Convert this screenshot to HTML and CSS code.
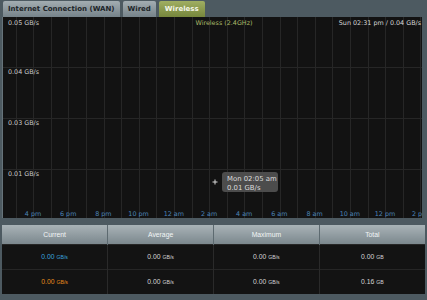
FILE: index.html
```html
<html>
<head>
	<meta charset="utf-8">
	<link rel="stylesheet" href="styles.css">
</head>
<body>
<div class="tabs">
	<div class="tab">Internet Connection (WAN)</div>
	<div class="tab">Wired</div>
	<div class="tab tab-active">Wireless</div>
</div>

<div class="chart">
	<svg width="419" height="201" viewBox="0 0 419 201">
		<g class="grid" id="grid"></g>
		<line class="hline" x1="0" y1="50.5" x2="419" y2="50.5"/>
		<line class="hline" x1="0" y1="101.5" x2="419" y2="101.5"/>
		<line class="hline" x1="0" y1="152.5" x2="419" y2="152.5"/>

		<text class="ylabel" x="5" y="7.5">0.05 GB/s</text>
		<text class="ylabel" x="5" y="57">0.04 GB/s</text>
		<text class="ylabel" x="5" y="108">0.03 GB/s</text>
		<text class="ylabel" x="5" y="159">0.01 GB/s</text>

		<text class="title" x="221" y="8" text-anchor="middle">Wireless (2.4GHz)</text>
		<text class="now" x="418" y="8" text-anchor="end">Sun 02:31 pm / 0.04 GB/s</text>

		<g class="xlabels" text-anchor="middle">
			<text x="30" y="199">4 pm</text>
			<text x="65.2" y="199">6 pm</text>
			<text x="100.4" y="199">8 pm</text>
			<text x="135.6" y="199">10 pm</text>
			<text x="170.8" y="199">12 am</text>
			<text x="206" y="199">2 am</text>
			<text x="241.2" y="199">4 am</text>
			<text x="276.4" y="199">6 am</text>
			<text x="311.6" y="199">8 am</text>
			<text x="346.8" y="199">10 am</text>
			<text x="382" y="199">12 pm</text>
			<text x="417.2" y="199">2 pm</text>
		</g>

		<g class="cursor">
			<line x1="209.5" y1="165" x2="214.5" y2="165"/>
			<line x1="212" y1="162.5" x2="212" y2="167.5"/>
		</g>
		<rect class="tip" x="219" y="155" width="56" height="20" rx="3"/>
		<text class="tiptext" x="224" y="164">Mon 02:05 am</text>
		<text class="tiptext" x="224" y="172.5">0.01 GB/s</text>
	</svg>
</div>

<table class="stats">
	<tr>
		<th>Current</th>
		<th>Average</th>
		<th>Maximum</th>
		<th>Total</th>
	</tr>
	<tr>
		<td class="rx">0.00 <span class="unit">GB/s</span></td>
		<td>0.00 <span class="unit">GB/s</span></td>
		<td>0.00 <span class="unit">GB/s</span></td>
		<td>0.00 <span class="unit">GB</span></td>
	</tr>
	<tr>
		<td class="tx">0.00 <span class="unit">GB/s</span></td>
		<td>0.00 <span class="unit">GB/s</span></td>
		<td>0.00 <span class="unit">GB/s</span></td>
		<td>0.16 <span class="unit">GB</span></td>
	</tr>
</table>

<script type="text/javascript">
	var grid = document.getElementById("grid");
	for (var k = 0; k < 24; k++) {
		var x = Math.round(12.6 + 17.6 * k) + 0.5;
		var l = document.createElementNS("http://www.w3.org/2000/svg", "line");
		l.setAttribute("x1", x);
		l.setAttribute("x2", x);
		l.setAttribute("y1", 0);
		l.setAttribute("y2", 201);
		grid.appendChild(l);
	}
</script>
</body>
</html>
```

FILE: styles.css
```css
body {
	margin: 0;
	background: #4d5a61;
	font-family: "DejaVu Sans", Verdana, sans-serif;
	width: 427px;
	height: 300px;
	overflow: hidden;
}

.tabs {
	display: flex;
	gap: 3px;
	padding: 1px 0 0 3px;
	height: 16px;
}
.tab {
	height: 16px;
	line-height: 16px;
	padding: 0 5px;
	font-size: 7px;
	font-weight: bold;
	color: #1d2529;
	background: linear-gradient(#a3adb1, #76838a);
	border-radius: 2px 2px 0 0;
	box-sizing: border-box;
}
.tab-active {
	color: #f4f6ea;
	background: linear-gradient(#a0ae62, #76863c);
	padding: 0 6px;
}

.chart {
	margin-left: 2px;
	width: 419px;
	height: 201px;
	border-left: 1px solid #66737a;
	background: #121212;
}
.chart svg {
	display: block;
}
.grid line,
.hline {
	stroke: #262626;
	stroke-width: 1;
}
.ylabel {
	font-size: 6.4px;
	fill: #c8c8c8;
}
.title {
	font-size: 6.4px;
	fill: #a9b868;
}
.now {
	font-size: 6.4px;
	fill: #d6d6d6;
}
.xlabels text {
	font-size: 6.4px;
	fill: #4b82b6;
}
.cursor line {
	stroke: #d8d8d8;
	stroke-width: 1;
}
.tip {
	fill: #4c4c4c;
}
.tiptext {
	font-size: 6.9px;
	fill: #dcdcdc;
}

.stats {
	margin: 7px 0 0 2px;
	width: 423px;
	border-collapse: collapse;
	table-layout: fixed;
	font-family: "Liberation Sans", Arial, sans-serif;
}
.stats th {
	height: 19px;
	padding: 0;
	font-size: 6.8px;
	font-weight: normal;
	color: #f2f5f6;
	background: linear-gradient(#a9b3b7, #7b878d);
	border-left: 1px solid #5d6a70;
}
.stats th:first-child,
.stats td:first-child {
	border-left: none;
}
.stats td {
	height: 25px;
	padding: 0;
	text-align: center;
	font-size: 6.8px;
	color: #d4d4d4;
	background: #131313;
	border-left: 1px solid #2a2a2a;
	border-top: 1px solid #262626;
}
.stats .unit {
	font-size: 5.2px;
}
.stats .rx {
	color: #3aa3df;
}
.stats .tx {
	color: #e58c1c;
}
```
